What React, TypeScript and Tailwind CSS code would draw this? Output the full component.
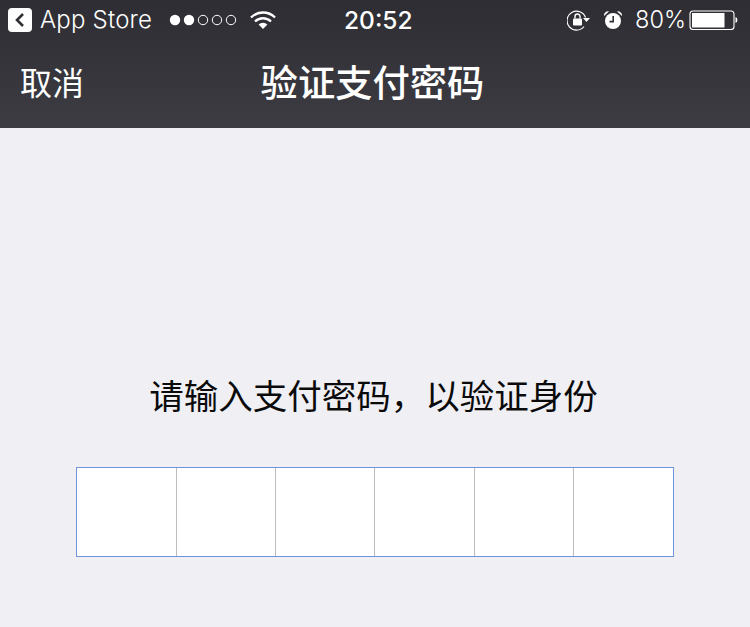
import React from "react";

const FONT = "font-['Noto_Sans_CJK_SC','Noto_Sans',sans-serif]";
const UI = "font-['Inter','Noto_Sans',sans-serif]";

function Signal() {
  return (
    <svg width="68" height="14" viewBox="0 0 68 14" className="block">
      <circle cx="6" cy="7" r="5.2" fill="#fff" />
      <circle cx="20" cy="7" r="5.2" fill="#fff" />
      <circle cx="34" cy="7" r="4.7" fill="none" stroke="#fff" strokeWidth="1" />
      <circle cx="48" cy="7" r="4.7" fill="none" stroke="#fff" strokeWidth="1" />
      <circle cx="62" cy="7" r="4.7" fill="none" stroke="#fff" strokeWidth="1" />
    </svg>
  );
}

function Wifi() {
  return (
    <svg width="26" height="20" viewBox="0 0 26 20" className="block">
      <path d="M1 7.5 A17 17 0 0 1 25 7.5" fill="none" stroke="#fff" strokeWidth="2.4" />
      <path d="M5 11.5 A11.5 11.5 0 0 1 21 11.5" fill="none" stroke="#fff" strokeWidth="2.4" />
      <path d="M8.6 14.5 A6.5 6.5 0 0 1 17.4 14.5 L13 19 Z" fill="#fff" />
    </svg>
  );
}

function Rotation() {
  return (
    <svg width="24" height="22" viewBox="0 0 24 22" className="block">
      <path d="M18.5 8.5 A9.5 9.5 0 1 0 17 17.5" fill="none" stroke="#fff" strokeWidth="1.2" />
      <path d="M16 9 L23 9 L19.5 13 Z" fill="#fff" />
      <rect x="6" y="9.5" width="9" height="7" rx="1" fill="#fff" />
      <path d="M8 9.5 V7.5 A2.5 2.5 0 0 1 13 7.5 V9.5" fill="none" stroke="#fff" strokeWidth="1.4" />
    </svg>
  );
}

function Alarm() {
  return (
    <svg width="20" height="20" viewBox="0 0 20 20" className="block">
      <circle cx="10" cy="11" r="8" fill="#fff" />
      <path d="M1 6 A4 4 0 0 1 6 1.5 Z" fill="#fff" />
      <path d="M19 6 A4 4 0 0 0 14 1.5 Z" fill="#fff" />
      <path d="M10.2 6 V11.6 H6.5" fill="none" stroke="#2f2f35" strokeWidth="1.6" />
    </svg>
  );
}

function Battery() {
  return (
    <svg width="50" height="20" viewBox="0 0 50 20" className="block">
      <rect x="1" y="1" width="44" height="18.5" rx="3" fill="none" stroke="#fff" strokeWidth="1.1" />
      <rect x="3" y="3" width="32.5" height="14.5" fill="#fff" />
      <path d="M46.5 7 C49 7.5 49 12.5 46.5 13 Z" fill="#fff" />
    </svg>
  );
}

export default function App() {
  const cells = [100, 99, 99, 100, 99, 99];
  return (
    <div className={`w-[750px] h-[627px] overflow-hidden flex flex-col bg-[#efeff4] ${FONT}`}>
      <header className="h-[128px] shrink-0 flex flex-col text-white bg-gradient-to-b from-[#2d2d33] to-[#3c3c42]">
        <div className={`h-[40px] flex items-center pl-2 pr-[11px] ${UI}`}>
          <div className="w-6 h-6 rounded-[4px] bg-white flex items-center justify-center">
            <svg width="14" height="16" viewBox="0 0 14 16">
              <path d="M10 2 L4 8 L10 14" fill="none" stroke="#2f2f35" strokeWidth="2.6" />
            </svg>
          </div>
          <span className="ml-[8px] w-[112px] text-[24px] leading-none font-light tracking-[0.2px] whitespace-nowrap">App Store</span>
          <div className="ml-[17px]"><Signal /></div>
          <div className="ml-[13px]"><Wifi /></div>
          <span className="ml-[68px] text-[24.5px] leading-none font-medium">20:52</span>
          <div className="ml-auto"><Rotation /></div>
          <div className="ml-[12px]"><Alarm /></div>
          <span className="ml-[12px] text-[23.5px] leading-none font-light">80%</span>
          <div className="ml-[3px]"><Battery /></div>
        </div>
        <div className="relative flex-1 flex items-center justify-center">
          <span className="absolute left-[20px] top-[21px] text-[32px] leading-[40px] font-normal">取消</span>
          <h1 className="text-[37.3px] leading-[44px] font-medium mr-[5px] -mt-[6px]">验证支付密码</h1>
        </div>
      </header>
      <main className="flex-1 flex flex-col items-center">
        <p className="mt-[244px] mr-[3px] text-[34.5px] leading-[44px] font-normal text-[#0a0a0a]">请输入支付密码，以验证身份</p>
        <div className="mt-[51px] w-[598px] h-[90px] flex bg-white border border-[#6f93dd]">
          {cells.map((w, i) => (
            <div
              key={i}
              style={{ width: w }}
              className={i < 5 ? "h-full border-r border-[#bdbdbd]" : "h-full flex-1"}
            />
          ))}
        </div>
      </main>
    </div>
  );
}
